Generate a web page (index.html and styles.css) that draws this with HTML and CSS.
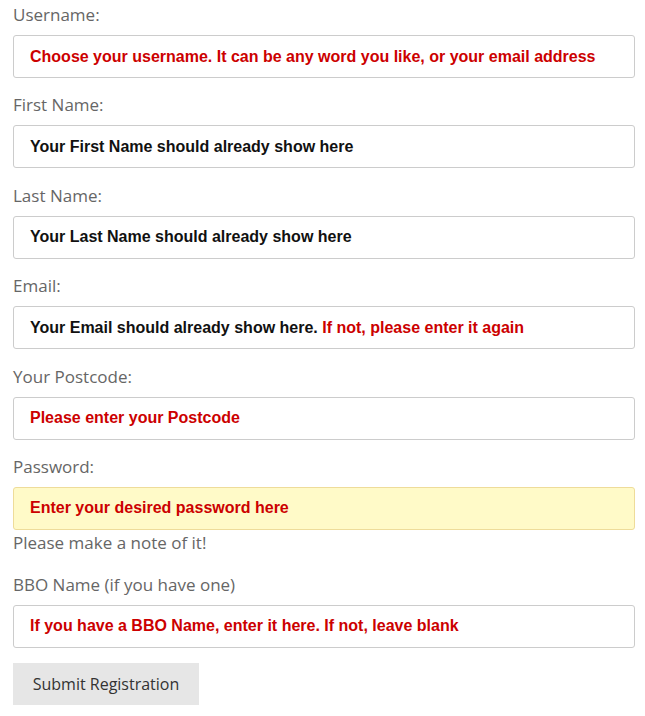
FILE: index.html
```html
<!DOCTYPE html>
<html lang="en">
  <head>
    <meta charset="UTF-8">
    <meta name="viewport" content="width=device-width, initial-scale=1.0">
    <title>Registration</title>
    <link rel="stylesheet" href="styles.css">
  </head>
  <body>
    <form class="register">
      <label class="field-label">Username:</label>
      <div class="field hint">Choose your username. It can be any word you like, or your email address</div>

      <label class="field-label">First Name:</label>
      <div class="field">Your First Name should already show here</div>

      <label class="field-label">Last Name:</label>
      <div class="field">Your Last Name should already show here</div>

      <label class="field-label">Email:</label>
      <div class="field">Your Email should already show here. <span class="hint">If not, please enter it again</span></div>

      <label class="field-label">Your Postcode:</label>
      <div class="field hint">Please enter your Postcode</div>

      <label class="field-label">Password:</label>
      <div class="field field-yellow hint">Enter your desired password here</div>
      <p class="note">Please make a note of it!</p>

      <label class="field-label">BBO Name (if you have one)</label>
      <div class="field hint">If you have a BBO Name, enter it here. If not, leave blank</div>

      <button type="button" class="submit">Submit Registration</button>
    </form>
  </body>
</html>
```

FILE: styles.css
```css
body {
  margin: 0;
  padding: 0;
  background-color: #ffffff;
  font-family: "Open Sans", "Noto Sans", sans-serif;
  color: #666666;
}

.register {
  display: flex;
  flex-direction: column;
  align-items: flex-start;
  padding: 3px 10px 0 13px;
}

.field-label {
  font-size: 17px;
  line-height: 24px;
  margin-bottom: 8px;
}

.field {
  box-sizing: border-box;
  width: 622px;
  height: 43px;
  padding: 0 16px;
  margin-bottom: 15.4px;
  display: flex;
  align-items: center;
  white-space: pre;
  font-family: "Liberation Sans", Arial, sans-serif;
  font-size: 16px;
  font-weight: bold;
  color: #111111;
  background-color: #ffffff;
  border: 1px solid #cccccc;
  border-radius: 3px;
}

.hint {
  color: #cc0000;
}

.field-yellow {
  background-color: #fffac8;
  border-color: #eedc9a;
  margin-bottom: 0;
}

.note {
  margin: 1px 0 18px 0;
  font-size: 17px;
  line-height: 24px;
}

.submit {
  margin-top: 0;
  width: 186px;
  height: 42px;
  border: none;
  border-radius: 0;
  background-color: #e6e6e6;
  color: #333333;
  font-family: "Open Sans", "Noto Sans", sans-serif;
  font-size: 16px;
  cursor: pointer;
}
```
